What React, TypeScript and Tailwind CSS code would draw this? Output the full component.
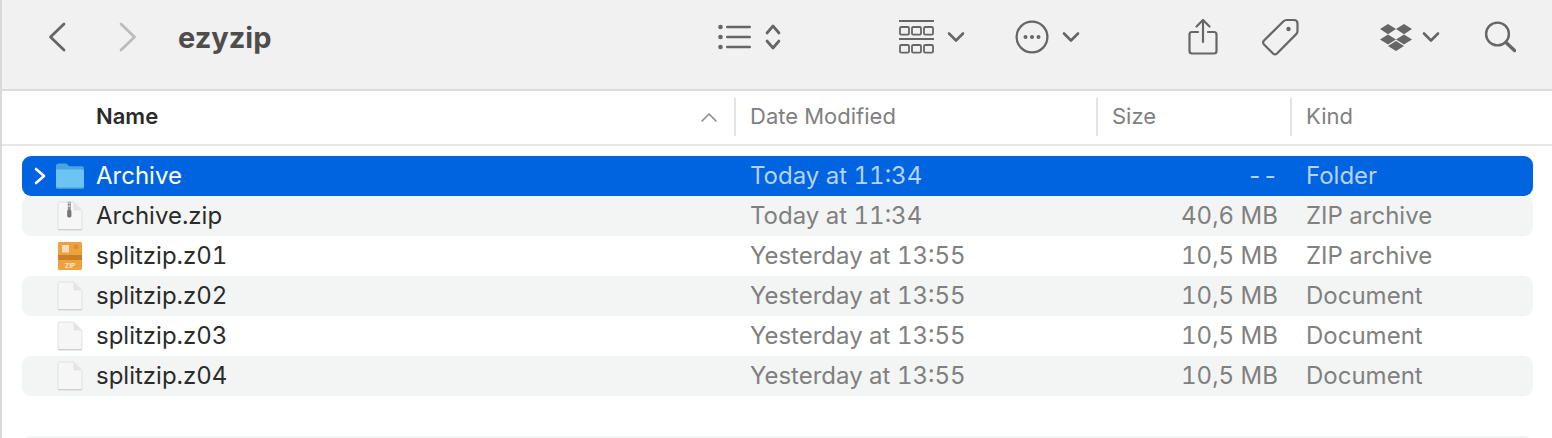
const stroke = "#666666";

function Chevron({ className = "" }: { className?: string }) {
  return (
    <svg width="18" height="12" viewBox="0 0 18 12" className={className}>
      <path d="M2 2.5 L9 9.5 L16 2.5" fill="none" stroke={stroke} strokeWidth="2.6" strokeLinecap="round" strokeLinejoin="round" />
    </svg>
  );
}

function Back() {
  return (
    <svg width="20" height="30" viewBox="0 0 20 30">
      <path d="M17 2 L3.5 15 L17 28" fill="none" stroke="#666666" strokeWidth="2.8" strokeLinecap="round" strokeLinejoin="round" />
    </svg>
  );
}
function Forward() {
  return (
    <svg width="20" height="30" viewBox="0 0 20 30">
      <path d="M3 2 L16.5 15 L3 28" fill="none" stroke="#bcbcbc" strokeWidth="2.8" strokeLinecap="round" strokeLinejoin="round" />
    </svg>
  );
}
function ListIcon() {
  return (
    <svg width="68" height="32" viewBox="0 0 68 32">
      <g fill={stroke}>
        <circle cx="3.5" cy="6" r="2.3" /><circle cx="3.5" cy="16" r="2.3" /><circle cx="3.5" cy="26" r="2.3" />
        <rect x="9" y="4.8" width="25" height="2.4" rx="1.2" /><rect x="9" y="14.8" width="25" height="2.4" rx="1.2" /><rect x="9" y="24.8" width="25" height="2.4" rx="1.2" />
      </g>
      <path d="M50 12 L56 5 L62 12 M50 20 L56 27 L62 20" fill="none" stroke={stroke} strokeWidth="2.7" strokeLinecap="round" strokeLinejoin="round" />
    </svg>
  );
}
function GroupIcon() {
  const cell = (x: number, y: number) => <rect key={`${x}-${y}`} x={x} y={y} width="9" height="7.6" rx="1.2" fill="none" stroke={stroke} strokeWidth="1.8" />;
  return (
    <svg width="38" height="36" viewBox="0 0 38 36">
      <rect x="1" y="1" width="35" height="2" fill={stroke} />
      <rect x="1" y="19" width="35" height="2" fill={stroke} />
      {[2, 14, 26].map((x) => cell(x, 8))}
      {[2, 14, 26].map((x) => cell(x, 26))}
    </svg>
  );
}
function MoreIcon() {
  return (
    <svg width="34" height="34" viewBox="0 0 34 34">
      <circle cx="17" cy="17" r="15.4" fill="none" stroke={stroke} strokeWidth="2.3" />
      <circle cx="10.5" cy="17" r="2" fill={stroke} /><circle cx="17" cy="17" r="2" fill={stroke} /><circle cx="23.5" cy="17" r="2" fill={stroke} />
    </svg>
  );
}
function ShareIcon() {
  return (
    <svg width="30" height="38" viewBox="0 0 30 38">
      <path d="M10 14 H4 Q1.5 14 1.5 16.5 V33 Q1.5 35.5 4 35.5 H26 Q28.5 35.5 28.5 33 V16.5 Q28.5 14 26 14 H20" fill="none" stroke={stroke} strokeWidth="2.2" strokeLinecap="round" />
      <path d="M15 24 V2.5 M8.5 8.5 L15 2 L21.5 8.5" fill="none" stroke={stroke} strokeWidth="2.2" strokeLinecap="round" strokeLinejoin="round" />
    </svg>
  );
}
function TagIcon() {
  return (
    <svg width="38" height="38" viewBox="0 0 38 38">
      <path d="M3 22.5 L22.5 3.3 Q23.8 2 25.6 2 H33 Q36.5 2 36.5 5.5 V13 Q36.5 14.8 35.2 16.1 L16 35.5 Q14 37.3 12 35.5 L3 26.5 Q1.2 24.5 3 22.5 Z" fill="none" stroke={stroke} strokeWidth="2.2" strokeLinejoin="round" />
      <circle cx="27.5" cy="11" r="2.2" fill={stroke} />
    </svg>
  );
}
function DropboxIcon() {
  return (
    <svg width="32" height="28" viewBox="0 0 32 28" fill={stroke}>
      <path d="M8 1 L16 6 L8 11.2 L0 6 Z" />
      <path d="M24 1 L32 6 L24 11.2 L16 6 Z" />
      <path d="M8 11.6 L16 16.6 L8 21.6 L0 16.6 Z" />
      <path d="M24 11.6 L32 16.6 L24 21.6 L16 16.6 Z" />
      <path d="M16 18 L24 23 L16 28 L8 23 Z" />
    </svg>
  );
}
function SearchIcon() {
  return (
    <svg width="32" height="32" viewBox="0 0 32 32">
      <circle cx="13.5" cy="13" r="11.4" fill="none" stroke={stroke} strokeWidth="2.4" />
      <path d="M22 21.5 L30.5 29.5" stroke={stroke} strokeWidth="3.4" strokeLinecap="round" />
    </svg>
  );
}
function FolderIcon() {
  return (
    <svg width="30" height="28" viewBox="0 0 30 28">
      <path d="M1 4 Q1 1.5 3.5 1.5 H10 Q11.5 1.5 12.5 2.6 L14 4.2 H27 Q29 4.2 29 6.5 V12 H1 Z" fill="#4aa5dc" />
      <path d="M1 7.6 H27 Q29 7.6 29 9.8 V24.5 Q29 26.7 27 26.7 H3 Q1 26.7 1 24.5 Z" fill="#6cc4f3" />
      <rect x="1" y="25.6" width="28" height="1.2" fill="#3f94cb" />
    </svg>
  );
}
function DocIcon({ zip }: { zip?: boolean }) {
  return (
    <svg width="26" height="30" viewBox="0 0 26 30">
      <path d="M1 2 Q1 1 2 1 H16.5 L25 9.5 V28 Q25 29 24 29 H2 Q1 29 1 28 Z" fill="#f6f6f6" stroke="#dcdcdc" strokeWidth="0.8" />
      <path d="M16.5 1 V8 Q16.5 9.5 18 9.5 H25 Z" fill="#e4e4e4" />
      <rect x="1.2" y="28" width="23.6" height="1.2" fill="#cfcfcf" />
      {zip && (
        <g>
          <rect x="10.8" y="0.8" width="3" height="15" fill="#8c8c8c" />
          <rect x="11.4" y="1.5" width="1.8" height="1.4" fill="#e8e8e8" />
          <rect x="11.4" y="4.5" width="1.8" height="1.4" fill="#e8e8e8" />
          <rect x="10.2" y="9" width="4.2" height="7.5" rx="1.4" fill="#777777" />
        </g>
      )}
    </svg>
  );
}
function PackageIcon() {
  return (
    <svg width="24" height="28" viewBox="0 0 24 28">
      <rect x="0" y="0" width="24" height="28" rx="1.2" fill="#eea13f" />
      <rect x="0" y="13" width="24" height="5" fill="#c97f26" />
      <rect x="4" y="3" width="7" height="7.5" fill="#f3dcc0" />
      <circle cx="18" cy="5" r="2.4" fill="#dc8e30" />
      <text x="12" y="25.5" textAnchor="middle" fontSize="6.5" fontWeight="700" fill="#fbe8cf" fontFamily="Inter, sans-serif">ZIP</text>
    </svg>
  );
}

type Row = { name: string; date: string; size: string; kind: string; icon: React.ReactNode };
const rows: Row[] = [
  { name: "Archive", date: "Today at 11:34", size: "--", kind: "Folder", icon: <FolderIcon /> },
  { name: "Archive.zip", date: "Today at 11:34", size: "40,6 MB", kind: "ZIP archive", icon: <DocIcon zip /> },
  { name: "splitzip.z01", date: "Yesterday at 13:55", size: "10,5 MB", kind: "ZIP archive", icon: <PackageIcon /> },
  { name: "splitzip.z02", date: "Yesterday at 13:55", size: "10,5 MB", kind: "Document", icon: <DocIcon /> },
  { name: "splitzip.z03", date: "Yesterday at 13:55", size: "10,5 MB", kind: "Document", icon: <DocIcon /> },
  { name: "splitzip.z04", date: "Yesterday at 13:55", size: "10,5 MB", kind: "Document", icon: <DocIcon /> },
];

function ColSep() {
  return <div className="h-[38px] w-[2px] bg-[#e3e3e3]" />;
}

export default function App() {
  return (
    <div className="h-[438px] w-[1552px] overflow-hidden border-l-2 border-[#d9d9d9] bg-white font-['Inter','Liberation_Sans',sans-serif]">
      <div className="flex h-[91px] items-center border-b-2 border-[#dcdcdc] bg-[#f1f1f1] pb-[15px]">
        <div className="ml-[45px] flex w-[20px] justify-center"><Back /></div>
        <div className="ml-[51px] flex w-[20px] justify-center"><Forward /></div>
        <div className="ml-[40px] text-[29px] leading-none font-bold text-[#4d4d4d]">ezyzip</div>
        <div className="ml-[445px]"><ListIcon /></div>
        <div className="ml-[113px]"><GroupIcon /></div>
        <div className="ml-[11px]"><Chevron /></div>
        <div className="ml-[50px]"><MoreIcon /></div>
        <div className="ml-[13px]"><Chevron /></div>
        <div className="ml-[108px]"><ShareIcon /></div>
        <div className="ml-[43px]"><TagIcon /></div>
        <div className="ml-[81px]"><DropboxIcon /></div>
        <div className="ml-[10px]"><Chevron /></div>
        <div className="ml-[44px]"><SearchIcon /></div>
      </div>

      <div className="flex h-[55px] items-center border-b-2 border-[#e6e6e6] pb-[2px] text-[22px] text-[#808080]">
        <div className="ml-[94px] w-[605px] font-semibold text-[#2b2b2b]">Name</div>
        <svg width="16" height="10" viewBox="0 0 16 10" className="mr-[17px]">
          <path d="M1 9 L8 2 L15 9" fill="none" stroke="#8c8c8c" strokeWidth="1.6" strokeLinecap="round" strokeLinejoin="round" />
        </svg>
        <ColSep />
        <div className="w-[360px] pl-[14px]">Date Modified</div>
        <ColSep />
        <div className="w-[192px] pl-[14px]">Size</div>
        <ColSep />
        <div className="pl-[14px]">Kind</div>
      </div>

      <div className="mt-[10px] ml-[20px] w-[1511px] tabular-nums">
        {rows.map((r, i) => {
          const selected = i === 0;
          const striped = i % 2 === 1;
          return (
            <div
              key={r.name}
              className={
                selected
                  ? "flex h-[40px] items-center rounded-[9px] bg-[#0064e1] text-[24px] text-white"
                  : striped
                    ? "flex h-[40px] items-center rounded-[9px] bg-[#f3f5f4] text-[24px] text-[#2b2b2b]"
                    : "flex h-[40px] items-center rounded-[9px] text-[24px] text-[#2b2b2b]"
              }
            >
              <div className="flex w-[25px] justify-end">
                {selected && (
                  <svg width="14" height="18" viewBox="0 0 14 18">
                    <path d="M3 2 L11 9 L3 16" fill="none" stroke="#ffffff" strokeWidth="2.6" strokeLinecap="round" strokeLinejoin="round" />
                  </svg>
                )}
              </div>
              <div className="ml-[8px] flex w-[30px] justify-center">{r.icon}</div>
              <div className="ml-[11px] w-[654px]">{r.name}</div>
              <div className={selected ? "w-[361px] text-[#b6d2f8]" : "w-[361px] text-[#808080]"}>{r.date}</div>
              <div className={selected ? "w-[167px] text-right text-[#b6d2f8]" : "w-[167px] text-right text-[#808080]"}>{r.size}</div>
              <div className={selected ? "ml-[28px] text-[#b6d2f8]" : "ml-[28px] text-[#808080]"}>{r.kind}</div>
            </div>
          );
        })}
        <div className="mt-[40px] h-[40px] rounded-[9px] bg-[#f3f5f4]" />
      </div>
    </div>
  );
}
